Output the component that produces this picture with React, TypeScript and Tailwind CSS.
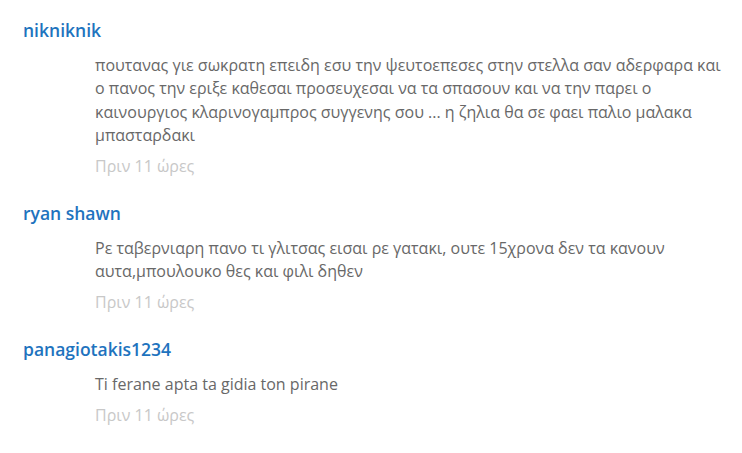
const comments = [
  {
    author: 'nikniknik',
    text: 'πουτανας γιε σωκρατη επειδη εσυ την ψευτοεπεσες στην στελλα σαν αδερφαρα και ο πανος την εριξε καθεσαι προσευχεσαι να τα σπασουν και να την παρει ο καινουργιος κλαρινογαμπρος συγγενης σου ... η ζηλια θα σε φαει παλιο μαλακα μπασταρδακι',
  },
  {
    author: 'ryan shawn',
    text: 'Ρε ταβερνιαρη πανο τι γλιτσας εισαι ρε γατακι, ουτε 15χρονα δεν τα κανουν αυτα,μπουλουκο θες και φιλι δηθεν',
  },
  {
    author: 'panagiotakis1234',
    text: 'Ti ferane apta ta gidia ton pirane',
  },
]

export default function App() {
  return (
    <div className="min-h-[453px] w-[742px] bg-white pl-[23px] pr-[10px] pt-[18px] font-['Open_Sans',sans-serif]">
      {comments.map((c) => (
        <div key={c.author} className="mb-[23px]">
          <div className="text-[17.5px] font-semibold leading-6 text-[#1e73be]">{c.author}</div>
          <div className="mt-[12px] pl-[72px]">
            <p className="text-[16px] leading-[23.4px] text-[#686868]">{c.text}</p>
            <div className="mt-[7px] text-[16px] leading-[23.4px] text-[#c8c8c8]">Πριν 11 ώρες</div>
          </div>
        </div>
      ))}
    </div>
  )
}
